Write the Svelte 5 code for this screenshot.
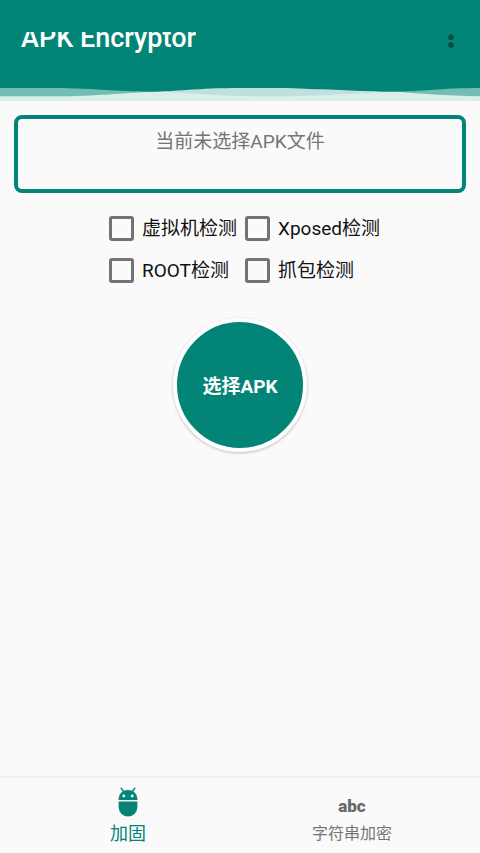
<script lang="ts">
    /* hardening options */
    let options = $state([
        { id: 'vm', label: '虚拟机检测', checked: false },
        { id: 'xposed', label: 'Xposed检测', checked: false },
        { id: 'root', label: 'ROOT检测', checked: false },
        { id: 'capture', label: '抓包检测', checked: false }
    ]);

    /* selected file */
    let fileInput: HTMLInputElement;
    let fileName = $state('');

    /* bottom navigation */
    let tab = $state('harden');

    function pickFile() {
        fileInput.click();
    }

    function onPick() {
        fileName = fileInput.files?.[0]?.name ?? '';
    }
</script>

<div class="screen">
    <header>
        <div class="bar">
            <h1>APK Encryptor</h1>
            <button class="more" aria-label="更多">
                <svg width="8" height="16" viewBox="0 0 8 16">
                    <circle cx="4" cy="4.3" r="2.8" />
                    <circle cx="4" cy="12" r="2.8" />
                </svg>
            </button>
        </div>
        <svg class="waves" viewBox="0 0 480 14" preserveAspectRatio="none">
            <rect width="480" height="14" fill="#daeeeb" />
            <path d="M0 0H90C112 1 132 3 152 4C125 5 108 8 60 9H0Z" fill="#74bdb5" />
            <path d="M480 0H455C430 1 412 3 398 4C420 6 444 8 480 9Z" fill="#74bdb5" />
            <path d="M165 4C190 3 210 0 240 0H290C320 1 350 3 378 5C345 6 310 9 265 9C225 9 200 6 165 4Z" fill="#bfe0dc" />
            <path d="M0 0C35 -1 65 0 90 1C120 3 140 4 152 4C175 4 200 0 240 0C265 -1 290 0 310 1C345 2 365 4 392 4C425 4 440 0 480 0Z" fill="#028577" />
        </svg>
    </header>

    <main>
        <p class="file">{fileName || '当前未选择APK文件'}</p>

        <div class="options">
            {#each options as option (option.id)}
                <label for={option.id}>
                    <input type="checkbox" id={option.id} bind:checked={option.checked} />
                    {option.label}
                </label>
            {/each}
        </div>

        <input class="picker" type="file" accept=".apk" aria-label="APK" bind:this={fileInput} onchange={onPick} />
        <button class="select" onclick={pickFile}>选择APK</button>
    </main>

    <nav>
        <button class:active={tab === 'harden'} onclick={() => (tab = 'harden')}>
            <svg width="20" height="30" viewBox="0 0 20 30">
                <path d="M3.2 1.2L5.8 5M16.8 1.2L14.2 5" stroke="currentColor" stroke-width="1.5" stroke-linecap="round" />
                <path d="M0.6 13V11.5A9.4 8.5 0 0 1 19.4 11.5V13Z" fill="currentColor" />
                <path d="M0.6 14.6H19.4V20A9.4 9.4 0 0 1 0.6 20Z" fill="currentColor" />
                <circle cx="5.8" cy="9" r="1.4" fill="#fafafa" />
                <circle cx="14.2" cy="9" r="1.4" fill="#fafafa" />
            </svg>
            <span class="name">加固</span>
        </button>
        <button class:active={tab === 'string'} onclick={() => (tab = 'string')}>
            <span class="abc">abc</span>
            <span class="name">字符串加密</span>
        </button>
    </nav>
</div>

<style>
    :global(body) {
        background: #fafafa;
    }

    .screen {
        display: flex;
        flex-direction: column;
        min-height: 100vh;
        font-family: Roboto, "Noto Sans CJK SC", sans-serif;
        color: #111;
    }

    button {
        border: 0;
        padding: 0;
        background: none;
        font-family: inherit;
        cursor: pointer;
    }

    .bar {
        display: flex;
        align-items: flex-start;
        justify-content: space-between;
        box-sizing: border-box;
        height: 88px;
        padding: 32px 25px 0 21px;
        background: #028577;
    }

    /* short line box cuts off the top of the title */
    h1 {
        margin: 0;
        padding-bottom: 10px;
        overflow: hidden;
        font-size: 27px;
        font-weight: 500;
        line-height: 13px;
        color: #fff;
    }

    .more {
        padding-top: 1px;
        line-height: 0;
        fill: #054b43;
    }

    .waves {
        display: block;
        width: 100%;
        height: 13px;
    }

    main {
        display: flex;
        flex: 1;
        flex-direction: column;
        align-items: center;
        padding: 14px;
    }

    .file {
        box-sizing: border-box;
        width: 100%;
        min-height: 78px;
        margin: 0;
        padding: 9px 8px;
        border: 4px solid #028577;
        border-radius: 8px;
        font-size: 19px;
        line-height: 28px;
        text-align: center;
        color: #757575;
    }

    .options {
        display: grid;
        grid-template-columns: auto auto;
        gap: 14px 8px;
        margin-top: 22px;
        padding-left: 9px;
    }

    label {
        display: flex;
        align-items: center;
        gap: 8px;
        font-size: 19px;
        line-height: 28px;
    }

    input[type="checkbox"] {
        appearance: none;
        box-sizing: border-box;
        width: 25px;
        height: 25px;
        margin: 0 0 2px;
        border: 3px solid #737373;
        border-radius: 3px;
    }

    input[type="checkbox"]:checked {
        border-color: #028577;
        background: #028577;
    }

    .picker {
        display: none;
    }

    .select {
        width: 134px;
        height: 134px;
        margin-top: 33px;
        padding-bottom: 2px;
        border: 4px solid #fff;
        border-radius: 50%;
        background: #028577;
        box-shadow: 0 1px 3px rgba(0, 0, 0, 0.25);
        font-size: 19px;
        font-weight: 700;
        color: #fff;
    }

    nav {
        display: flex;
        padding: 0 16px;
        border-top: 2px solid #f1f1f1;
    }

    nav button {
        display: flex;
        flex: 1;
        flex-direction: column;
        gap: 3px;
        align-items: center;
        padding: 9px 0 5px;
        font-size: 16px;
        color: #757575;
    }

    nav .active {
        font-size: 18px;
        color: #028577;
    }

    nav svg {
        fill: none;
    }

    .abc {
        height: 30px;
        font-size: 17px;
        font-weight: 900;
        line-height: 38px;
        color: #696969;
    }

    .name {
        line-height: 28px;
    }
</style>
